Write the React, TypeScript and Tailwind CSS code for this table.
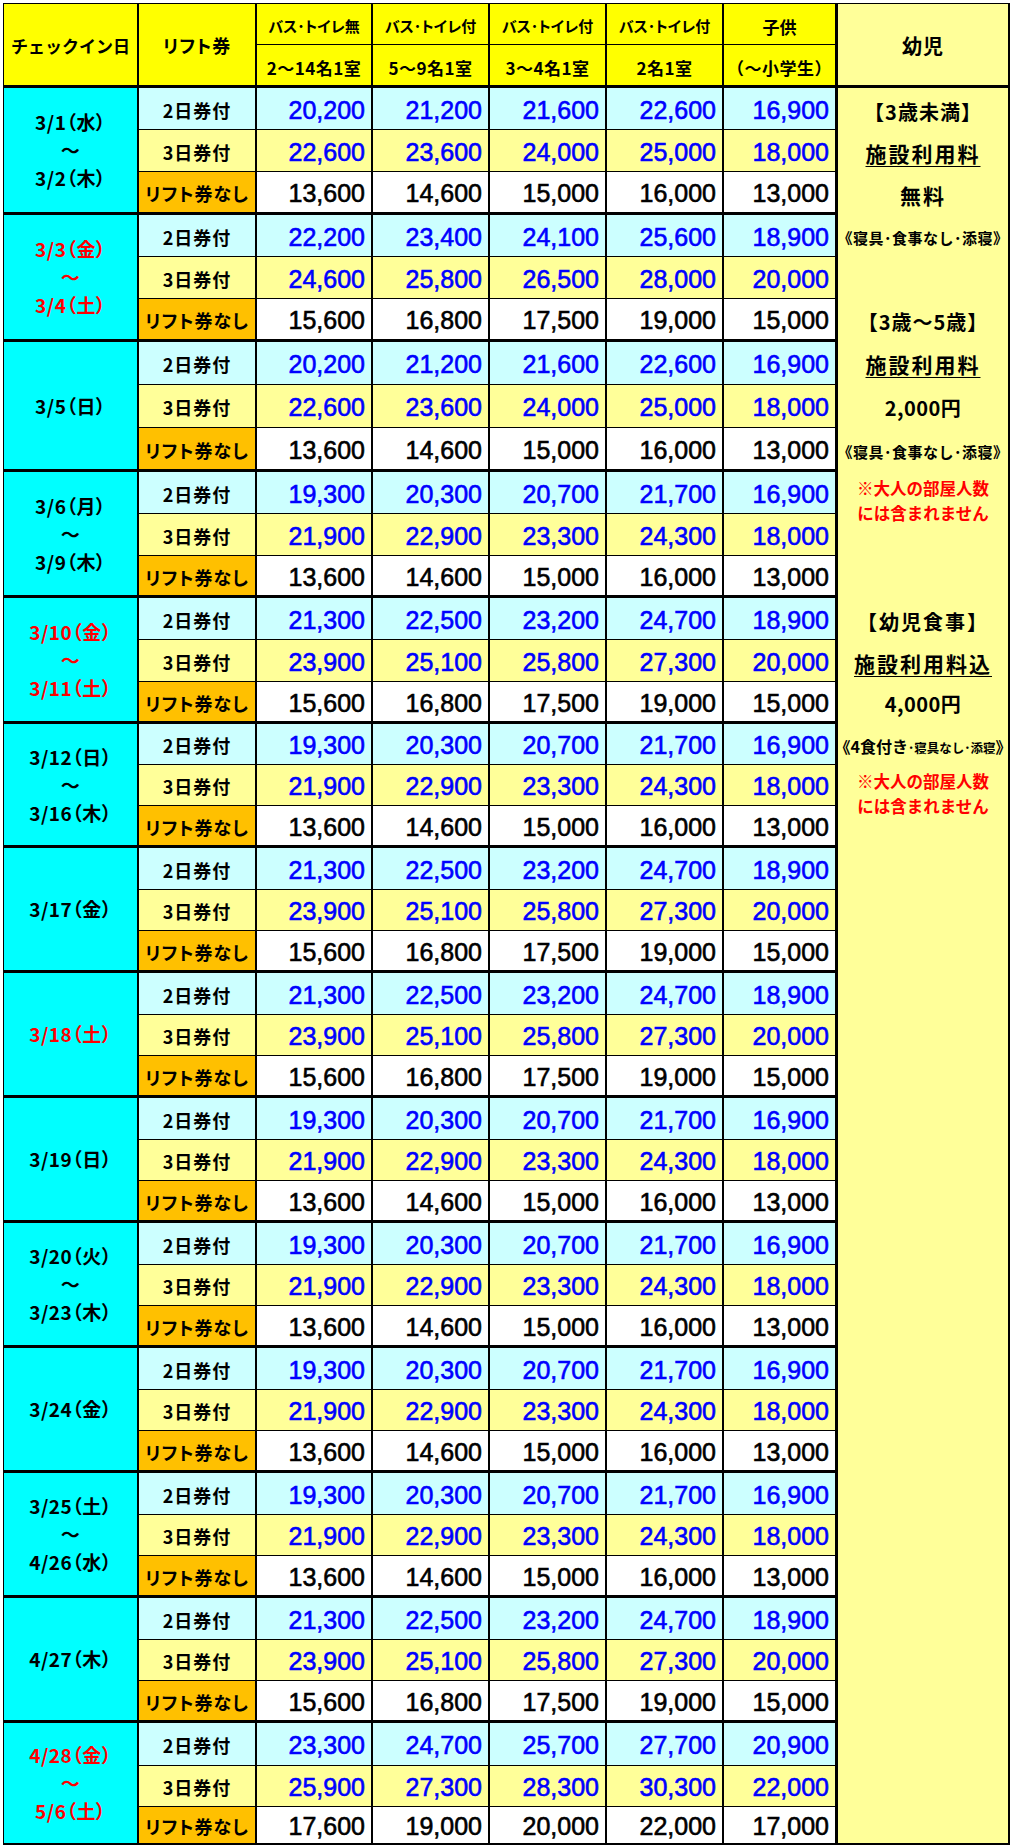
import React from "react";

const A = [[20200,21200,21600,22600,16900],[22600,23600,24000,25000,18000],[13600,14600,15000,16000,13000]];
const B = [[22200,23400,24100,25600,18900],[24600,25800,26500,28000,20000],[15600,16800,17500,19000,15000]];
const C = [[19300,20300,20700,21700,16900],[21900,22900,23300,24300,18000],[13600,14600,15000,16000,13000]];
const D = [[21300,22500,23200,24700,18900],[23900,25100,25800,27300,20000],[15600,16800,17500,19000,15000]];
const E = [[23300,24700,25700,27700,20900],[25900,27300,28300,30300,22000],[17600,19000,20000,22000,17000]];

const R127 = [42, 42, 43];
const R130 = [43, 43, 44];
const R126 = [42, 42, 42];
const R124 = [41, 41, 42];
const R125 = [42, 41, 42];
const RL = [43, 41, 38];

type G = { d: string[]; red?: boolean; rows: number[]; p: number[][] };

const groups: G[] = [
  { d: ["3/1（水）", "～", "3/2（木）"], rows: R127, p: A },
  { d: ["3/3（金）", "～", "3/4（土）"], red: true, rows: R127, p: B },
  { d: ["3/5（日）"], rows: R130, p: A },
  { d: ["3/6（月）", "～", "3/9（木）"], rows: R126, p: C },
  { d: ["3/10（金）", "～", "3/11（土）"], red: true, rows: R126, p: D },
  { d: ["3/12（日）", "～", "3/16（木）"], rows: R124, p: C },
  { d: ["3/17（金）"], rows: R125, p: D },
  { d: ["3/18（土）"], red: true, rows: R125, p: D },
  { d: ["3/19（日）"], rows: R125, p: C },
  { d: ["3/20（火）", "～", "3/23（木）"], rows: R125, p: C },
  { d: ["3/24（金）"], rows: R125, p: C },
  { d: ["3/25（土）", "～", "4/26（水）"], rows: R125, p: C },
  { d: ["4/27（木）"], rows: R125, p: D },
  { d: ["4/28（金）", "～", "5/6（土）"], red: true, rows: RL, p: E },
];

const H: Record<number, string> = {
  38: "h-[38px]",
  41: "h-[41px]",
  42: "h-[42px]",
  43: "h-[43px]",
  44: "h-[44px]",
};

const colW = ["w-[118px]", "w-[116px]", "w-[117px]", "w-[117px]", "w-[117px]", "w-[114px]"];
const colR = ["border-r-2", "border-r-2", "border-r-2", "border-r-2", "border-r-2", "border-r-[3px]"];
const labels = ["2日券付", "3日券付", "リフト券なし"];
const rowBg = ["bg-[#CCFFFF]", "bg-[#FFFF99]", "bg-white"];
const labelBg = ["bg-[#CCFFFF]", "bg-[#FFFF99]", "bg-[#FFC000]"];

const fmt = (n: number) => n.toLocaleString("en-US");

function Group({ g, last }: { g: G; last: boolean }) {
  return (
    <div className="flex">
      <div
        className={`flex w-[135px] flex-col items-center justify-center border-r-2 border-black bg-[#00FFFF] text-[19px] font-bold [font-feature-settings:'palt'] ${
          last ? "border-b-2" : "border-b-[3px]"
        } ${g.red ? "text-[#FF0000]" : "text-black"}`}
      >
        {g.d.map((t, i) => (
          <div key={i} className="whitespace-nowrap leading-[28px] tracking-[0.5px]">
            {t}
          </div>
        ))}
      </div>
      <div className="flex flex-col">
        {g.rows.map((h, r) => {
          const bb = r < 2 ? "border-b" : last ? "border-b-2" : "border-b-[3px]";
          return (
            <div key={r} className={`flex ${H[h]}`}>
              <div
                className={`flex items-center justify-center whitespace-nowrap pt-[3px] ${colW[0]} ${colR[0]} ${bb} border-black ${labelBg[r]} text-[18px] font-bold tracking-[1px] [font-feature-settings:'palt']`}
              >
                {labels[r]}
              </div>
              {g.p[r].map((v, c) => (
                <div
                  key={c}
                  className={`flex items-center justify-end pr-[6px] pt-[4px] ${colW[c + 1]} ${colR[c + 1]} ${bb} border-black ${rowBg[r]} font-['Liberation_Sans',Arial,sans-serif] text-[25px] font-normal [-webkit-text-stroke:0.6px_currentColor] ${
                    r < 2 ? "text-[#0000FF]" : "text-black"
                  }`}
                >
                  {fmt(v)}
                </div>
              ))}
            </div>
          );
        })}
      </div>
    </div>
  );
}

const top1 = ["バス･トイレ無", "バス･トイレ付", "バス･トイレ付", "バス･トイレ付", "子供"];
const top2 = ["2～14名1室", "5～9名1室", "3～4名1室", "2名1室", "（～小学生）"];

function Line({ h, children, cls = "" }: { h: string; children?: React.ReactNode; cls?: string }) {
  return (
    <div className={`flex w-full items-center justify-center whitespace-nowrap ${h} ${cls}`}>
      <span>{children}</span>
    </div>
  );
}

export default function App() {
  return (
    <div className="min-h-[1847px] bg-white font-['Noto_Sans_CJK_JP','Noto_Sans',sans-serif] text-black">
      <div className="ml-[3px] mt-[3px] flex w-[1007px] border-l border-t border-black">
        <div className="flex flex-col">
          <div className="flex">
            <div className="flex h-[84px] w-[135px] items-center justify-center border-b-[3px] border-r-2 border-black bg-[#FFFF00] pt-[2px] text-[17px] font-bold">
              チェックイン日
            </div>
            <div className="flex h-[84px] w-[118px] items-center justify-center border-b-[3px] border-r-2 border-black bg-[#FFFF00] pt-[2px] text-[18px] font-bold tracking-[1px] [font-feature-settings:'palt']">
              リフト券
            </div>
            <div className="flex flex-col">
              <div className="flex h-[41px]">
                {top1.map((t, i) => (
                  <div
                    key={i}
                    className={`flex items-center justify-center whitespace-nowrap border-b border-black bg-[#FFFF00] pt-[5px] font-bold [font-feature-settings:'palt'] ${
                      i === 4 ? "text-[17px]" : "text-[15px]"
                    } ${colW[i + 1]} ${colR[i + 1]}`}
                  >
                    {t}
                  </div>
                ))}
              </div>
              <div className="flex h-[43px]">
                {top2.map((t, i) => (
                  <div
                    key={i}
                    className={`flex items-center justify-center whitespace-nowrap border-b-[3px] border-black bg-[#FFFF00] pt-[5px] text-[17px] font-bold tracking-[0.5px] ${colW[i + 1]} ${colR[i + 1]}`}
                  >
                    {t}
                  </div>
                ))}
              </div>
            </div>
          </div>
          {groups.map((g, i) => (
            <Group key={i} g={g} last={i === groups.length - 1} />
          ))}
        </div>
        <div className="flex w-[172px] flex-col">
          <div className="flex h-[84px] items-center justify-center border-b-[3px] border-r-2 border-black bg-[#FFFF99] pt-[2px] text-[20px] font-bold tracking-[1px]">
            幼児
          </div>
          <div className="flex flex-1 flex-col items-center border-b-2 border-r-2 border-black bg-[#FFFF99] pt-[3px] font-bold">
            <Line h="h-[42px]" cls="text-[20px] tracking-[1px]">【3歳未満】</Line>
            <Line h="h-[42px]" cls="text-[21px] tracking-[2px]">
              <span className="underline decoration-1 underline-offset-[4px]">施設利用料</span>
            </Line>
            <Line h="h-[42px]" cls="text-[21px] tracking-[2px]">無料</Line>
            <Line h="h-[42px]" cls="text-[15px] tracking-[0.5px]">《寝具･食事なし･添寝》</Line>
            <div className="h-[42px]" />
            <Line h="h-[42px]" cls="text-[20px] tracking-[1px]">【3歳～5歳】</Line>
            <Line h="h-[43px]" cls="text-[21px] tracking-[2px]">
              <span className="underline decoration-1 underline-offset-[4px]">施設利用料</span>
            </Line>
            <Line h="h-[43px]" cls="text-[20px] tracking-[0.5px]">2,000円</Line>
            <Line h="h-[46px]" cls="text-[15px] tracking-[0.5px]">《寝具･食事なし･添寝》</Line>
            <Line h="h-[26px]" cls="text-[16.5px] text-[#FF0000]">※大人の部屋人数</Line>
            <Line h="h-[25px]" cls="text-[16.5px] text-[#FF0000]">には含まれません</Line>
            <div className="h-[75px]" />
            <Line h="h-[42px]" cls="text-[20px] tracking-[2px]">【幼児食事】</Line>
            <Line h="h-[41px]" cls="text-[21px] tracking-[2px]">
              <span className="underline decoration-1 underline-offset-[4px]">施設利用料込</span>
            </Line>
            <Line h="h-[40px]" cls="text-[20px] tracking-[0.5px]">4,000円</Line>
            <Line h="h-[44px]" cls="text-[16px]">
              《4食付き<span className="text-[12.5px]">･寝具なし･添寝</span>》
            </Line>
            <Line h="h-[26px]" cls="text-[16.5px] text-[#FF0000]">※大人の部屋人数</Line>
            <Line h="h-[25px]" cls="text-[16.5px] text-[#FF0000]">には含まれません</Line>
          </div>
        </div>
      </div>
    </div>
  );
}
